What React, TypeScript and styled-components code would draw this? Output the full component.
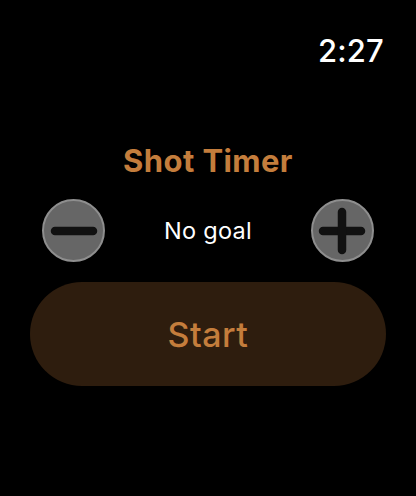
import React, { useState } from 'react'
import styled, { createGlobalStyle } from 'styled-components'

const GlobalStyle = createGlobalStyle`
  html, body {
    margin: 0;
    padding: 0;
    background: #000;
  }
  body {
    font-family: Inter, 'Noto Sans', sans-serif;
    -webkit-font-smoothing: antialiased;
  }
`

const Screen = styled.div`
  width: 416px;
  height: 496px;
  background: #000;
  display: flex;
  flex-direction: column;
  box-sizing: border-box;
  padding: 33px 30px 0 30px;
`

const StatusBar = styled.div`
  display: flex;
  justify-content: flex-end;
  padding-right: 2px;
`

const Clock = styled.span`
  color: #fff;
  font-size: 31px;
  font-weight: 500;
  line-height: 36px;
  letter-spacing: 0.2px;
`

const Title = styled.h1`
  margin: 74px 0 0 0;
  text-align: center;
  color: #c47d3c;
  font-size: 31px;
  font-weight: 700;
  line-height: 36px;
  letter-spacing: 0.4px;
`

const GoalRow = styled.div`
  margin-top: 20px;
  display: flex;
  align-items: center;
  justify-content: space-between;
  padding: 0 12px;
`

const RoundButton = styled.button`
  width: 63px;
  height: 63px;
  border-radius: 50%;
  border: 2px solid #8e8e8e;
  background: #666;
  padding: 0;
  display: flex;
  align-items: center;
  justify-content: center;
  cursor: pointer;
  box-sizing: border-box;
`

const GoalLabel = styled.span`
  color: #fff;
  font-size: 23.5px;
  font-weight: 400;
  line-height: 28px;
  letter-spacing: 0.3px;
`

const StartButton = styled.button`
  margin-top: 20px;
  width: 356px;
  height: 104px;
  border-radius: 52px;
  border: none;
  background: #2e1d0e;
  color: #c47d3c;
  font-family: inherit;
  font-size: 34px;
  font-weight: 500;
  letter-spacing: 0.5px;
  cursor: pointer;
`

function MinusIcon() {
  return (
    <svg width="48" height="10" viewBox="0 0 48 10">
      <line x1="5" y1="5" x2="43" y2="5" stroke="#111" strokeWidth="8.5" strokeLinecap="round" />
    </svg>
  )
}

function PlusIcon() {
  return (
    <svg width="48" height="48" viewBox="0 0 48 48">
      <line x1="5" y1="24" x2="43" y2="24" stroke="#111" strokeWidth="8.5" strokeLinecap="round" />
      <line x1="24" y1="5" x2="24" y2="43" stroke="#111" strokeWidth="8.5" strokeLinecap="round" />
    </svg>
  )
}

export default function App() {
  const [goal, setGoal] = useState(0)

  return (
    <>
      <GlobalStyle />
      <Screen>
        <StatusBar>
          <Clock>2:27</Clock>
        </StatusBar>
        <Title>Shot Timer</Title>
        <GoalRow>
          <RoundButton onClick={() => setGoal((g) => Math.max(0, g - 1))}>
            <MinusIcon />
          </RoundButton>
          <GoalLabel>{goal === 0 ? 'No goal' : `${goal} shots`}</GoalLabel>
          <RoundButton onClick={() => setGoal((g) => g + 1)}>
            <PlusIcon />
          </RoundButton>
        </GoalRow>
        <StartButton>Start</StartButton>
      </Screen>
    </>
  )
}
